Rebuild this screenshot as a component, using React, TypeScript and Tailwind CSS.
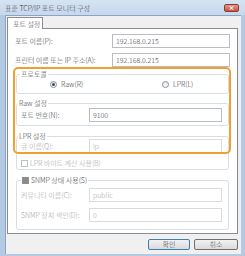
const field = "border border-[#b9bcc2] bg-white h-[14px] flex items-center pl-[3px]";
const fieldOff = "border border-[#d9dbde] bg-white h-[14px] flex items-center pl-[3px] text-[#a3a3a3]";

function Radio({ checked }: { checked?: boolean }) {
  return (
    <span className="w-[7px] h-[7px] rounded-full border border-[#8a9099] bg-gradient-to-b from-[#e6e6e6] to-[#fafafa] flex items-center justify-center">
      {checked && <span className="w-[3px] h-[3px] rounded-full bg-[#2b4f73]" />}
    </span>
  );
}

function Check({ checked, off }: { checked?: boolean; off?: boolean }) {
  return (
    <span
      className={`w-[7px] h-[7px] border ${off ? 'border-[#c0c0c0]' : 'border-[#8e8f8f]'} bg-white flex items-center justify-center`}
    >
      {checked && <span className="w-[5px] h-[5px] bg-[#8a8a8a]" />}
    </span>
  );
}

export default function App() {
  return (
    <div className="w-[245px] h-[256px] bg-[#b4c9e2] flex flex-col overflow-hidden font-['Noto_Sans_CJK_KR','Liberation_Sans',sans-serif] font-light text-[7px] leading-[10px] text-[#3a3a3a]">
      {/* Title bar */}
      <div className="h-[15px] shrink-0 flex items-center justify-between pl-[5px] pr-[6px] bg-gradient-to-b from-[#d6e3f2] to-[#c6d8ec]">
        <span className="text-[#333]">표준 TCP/IP 포트 모니터 구성</span>
        <div className="w-[15px] h-[8px] rounded-[2px] border border-[#8d3a30] bg-gradient-to-b from-[#e39a8c] to-[#c6523f] flex items-center justify-center">
          <span className="text-white text-[6px] leading-[6px] font-bold">×</span>
        </div>
      </div>

      {/* Client area */}
      <div className="flex-1 ml-[5px] mr-[4px] mb-[2px] bg-[#f0f0f0] border-l border-t border-[#8aa4c4] flex flex-col pl-[1px] pr-[3px] pt-[1px]">
        {/* Tab header */}
        <div className="relative z-10 w-[36px] h-[12px] -mb-[1px] border border-b-0 border-[#898c95] bg-white flex items-center pl-[5px]">
          포트 설정
        </div>

        {/* Tab panel */}
        <div className="relative h-[206px] border border-[#898c95] bg-white flex flex-col">
          <div className="pt-[5px] px-[7px] flex flex-col gap-[5px]">
            <div className="flex items-center justify-between">
              <span>포트 이름(P):</span>
              <div className={`${field} w-[118px]`}>192.168.0.215</div>
            </div>
            <div className="flex items-center justify-between">
              <span>프린터 이름 또는 IP 주소(A):</span>
              <div className={`${field} w-[118px]`}>192.168.0.215</div>
            </div>
          </div>

          <div className="ml-[8px] mr-[8px] flex flex-col">
            {/* Protocol */}
            <fieldset className="mt-[2px] border border-[#d5dfe5] rounded-[3px] pb-[4px]">
              <legend className="ml-[3px] px-[1px] leading-[10px]">프로토콜</legend>
              <div className="h-[10px] flex items-center pl-[33px]">
                <div className="w-[112px] flex items-center gap-[4px]">
                  <Radio checked />
                  <span>Raw(R)</span>
                </div>
                <div className="flex items-center gap-[4px]">
                  <Radio />
                  <span>LPR(L)</span>
                </div>
              </div>
            </fieldset>

            {/* Raw settings */}
            <fieldset className="mt-[4px] border border-[#d5dfe5] rounded-[3px] pb-[3px]">
              <legend className="ml-[1px] px-[1px] leading-[10px]">Raw 설정</legend>
              <div className="flex items-center justify-between pl-[4px] pr-[6px]">
                <span>포트 번호(N):</span>
                <div className={`${field} w-[133px] h-[13px]`}>9100</div>
              </div>
            </fieldset>

            {/* LPR settings */}
            <fieldset className="mt-[5px] border border-[#d5dfe5] rounded-[3px] pb-[1px]">
              <legend className="ml-[1px] px-[1px] leading-[10px]">LPR 설정</legend>
              <div className="-mt-[2px] flex items-center justify-between pl-[4px] pr-[6px]">
                <span className="text-[#a3a3a3]">큐 이름(Q):</span>
                <div className={`${fieldOff} w-[133px] h-[13px]`}>lp</div>
              </div>
              <div className="mt-[5px] h-[10px] flex items-center gap-[2px] pl-[4px] text-[#a3a3a3]">
                <Check off />
                <span>LPR 바이트 계산 사용(B)</span>
              </div>
            </fieldset>

            {/* SNMP */}
            <fieldset className="mt-[5px] border border-[#d5dfe5] rounded-[3px] pb-[7px]">
              <legend className="ml-[4px] px-[1px] leading-[10px]">
                <span className="flex items-center gap-[2px]">
                  <Check checked />
                  <span>SNMP 상태 사용(S)</span>
                </span>
              </legend>
              <div className="mt-[3px] flex items-center justify-between pl-[4px] pr-[6px]">
                <span className="text-[#a3a3a3]">커뮤니티 이름(C):</span>
                <div className={`${fieldOff} w-[133px] h-[13px]`}>public</div>
              </div>
              <div className="mt-[6px] flex items-center justify-between pl-[4px] pr-[6px]">
                <span className="text-[#a3a3a3]">SNMP 장치 색인(D):</span>
                <div className={`${fieldOff} w-[133px] h-[13px]`}>0</div>
              </div>
            </fieldset>
          </div>

          {/* Highlight annotation */}
          <div className="absolute left-[5px] top-[38px] w-[218px] h-[87px] border-2 border-[#f0a033] rounded-[5px] pointer-events-none" />
        </div>

        {/* Buttons */}
        <div className="mt-[5px] flex justify-end gap-[4px]">
          <button className="w-[42px] h-[11px] rounded-[2px] border border-[#3c7fb1] bg-gradient-to-b from-[#f2f2f2] to-[#dadada] text-[7px] leading-[9px]">
            확인
          </button>
          <button className="w-[44px] h-[11px] rounded-[2px] border border-[#707070] bg-gradient-to-b from-[#f2f2f2] to-[#dadada] text-[7px] leading-[9px]">
            취소
          </button>
        </div>
      </div>
    </div>
  );
}
